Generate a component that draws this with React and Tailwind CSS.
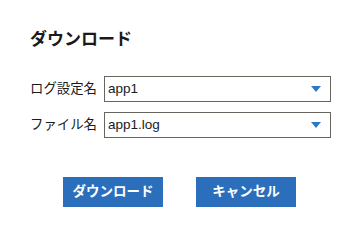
export default function App() {
  const rows = [
    { label: "ログ設定名", value: "app1" },
    { label: "ファイル名", value: "app1.log" },
  ];

  return (
    <div
      className="w-[358px] h-[236px] bg-white text-[#1a1a1a] pt-[29px] pl-[30px]"
      style={{ fontFamily: '"Liberation Sans", "Noto Sans CJK JP", sans-serif' }}
    >
      <h1 className="text-[17px] font-bold leading-[22px]">ダウンロード</h1>

      <div className="mt-[25px] flex flex-col gap-[10px]">
        {rows.map((row) => (
          <div key={row.label} className="flex items-center h-[26px]">
            <label className="w-[68px] text-right text-[13.4px] pr-[1px]">{row.label}</label>
            <div className="ml-[6px] w-[227px] h-[26px] border border-[#66665e] flex items-center justify-between pl-[3px] pr-[9px]">
              <span className="text-[13.5px]">{row.value}</span>
              <svg width="10" height="6" viewBox="0 0 10 6">
                <polygon points="0,0 10,0 5,6" fill="#2e78c8" />
              </svg>
            </div>
          </div>
        ))}
      </div>

      <div className="mt-[39px] -ml-[30px] flex justify-center gap-[33px] pl-[1px]">
        <button className="w-[100px] h-[30px] bg-[#2b6fbc] text-white font-bold text-[13.5px]">
          ダウンロード
        </button>
        <button className="w-[100px] h-[30px] bg-[#2b6fbc] text-white font-bold text-[13.5px]">
          キャンセル
        </button>
      </div>
    </div>
  );
}
